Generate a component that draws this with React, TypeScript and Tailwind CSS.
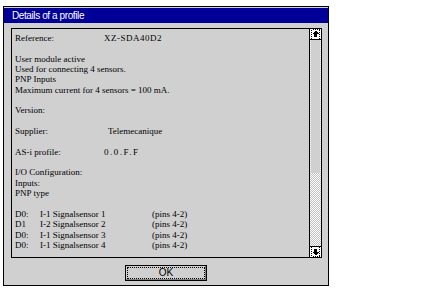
import React from "react";

const serif = { fontFamily: '"Liberation Serif", "Times New Roman", serif' };
const sans = { fontFamily: '"Liberation Sans", Arial, sans-serif' };

function ArrowButton({ down }: { down?: boolean }) {
  const dots: React.ReactElement[] = [];
  for (let y = 0; y < 10; y += 2) {
    dots.push(<rect key={"l" + y} x={1} y={y + (down ? 0 : 1)} width={1} height={1} fill="#000" />);
    dots.push(<rect key={"r" + y} x={9} y={y + (down ? 0 : 1)} width={1} height={1} fill="#000" />);
  }
  for (let x = 2; x < 9; x += 2) {
    dots.push(<rect key={"t" + x} x={x + 1} y={down ? 9 : 0} width={1} height={1} fill="#000" />);
  }
  return (
    <svg width="11" height="10" viewBox="0 0 11 10" shapeRendering="crispEdges" className="block">
      <rect x={0} y={0} width={11} height={10} fill="#fff" />
      {dots}
      {down ? (
        <g fill="#000">
          <rect x={4} y={2} width={3} height={3} />
          <polygon points="2,5 9,5 5.5,8.5" />
        </g>
      ) : (
        <g fill="#000">
          <polygon points="5.5,1.5 2,5 9,5" />
          <rect x={4} y={5} width={3} height={3} />
        </g>
      )}
    </svg>
  );
}

function Line({ children }: { children?: React.ReactNode }) {
  return <div className="h-[10.35px] leading-[10.35px] whitespace-nowrap flex">{children}</div>;
}

function Pair({ label, value, valueClass }: { label: string; value: string; valueClass?: string }) {
  return (
    <Line>
      <span className="w-[89px] shrink-0">{label}</span>
      <span className={valueClass}>{value}</span>
    </Line>
  );
}

function DRow({ a, b }: { a: string; b: string }) {
  return (
    <Line>
      <span className="w-[25px] shrink-0">{a}</span>
      <span className="w-[112px] shrink-0">{b}</span>
      <span>(pins 4-2)</span>
    </Line>
  );
}

export default function App() {
  return (
    <div className="w-[440px] h-[300px] bg-white overflow-hidden pt-[6px] pl-[3px]">
      <div className="w-[326px] h-[280px] border border-black bg-[#d0d0d0] flex flex-col">
        <div
          className="mt-[1px] h-[15px] bg-[#000098] text-white text-[10px] tracking-[-0.4px] pl-[8px] flex items-center leading-none"
          style={sans}
        >
          Details of a profile
        </div>
        <div className="mt-[5px] ml-[7px] w-[311px] h-[230px] border border-black flex">
          <div className="flex-1 pl-[3px] pt-[4px] text-[9px] text-black" style={serif}>
            <Pair label="Reference:" value="XZ-SDA40D2" valueClass="tracking-[0.5px]" />
            <Line />
            <Line>User module active</Line>
            <Line>Used for connecting 4 sensors.</Line>
            <Line>PNP Inputs</Line>
            <Line>Maximum current for 4 sensors = 100 mA.</Line>
            <Line />
            <Line>Version:</Line>
            <Line />
            <Pair label="Supplier:" value="Telemecanique" valueClass="pl-[4px]" />
            <Line />
            <Pair label="AS-i profile:" value="0.0.F.F" valueClass="tracking-[1.5px]" />
            <Line />
            <Line>I/O Configuration:</Line>
            <Line>Inputs:</Line>
            <Line>PNP type</Line>
            <Line />
            <DRow a="D0:" b="I-1 Signalsensor 1" />
            <DRow a="D1" b="I-2 Signalsensor 2" />
            <DRow a="D0:" b="I-1 Signalsensor 3" />
            <DRow a="D0:" b="I-1 Signalsensor 4" />
          </div>
          <div className="w-[12px] border-l border-black flex flex-col">
            <div className="h-[11px] border-b border-black">
              <ArrowButton />
            </div>
            <div className="h-[133px] border-x border-dotted border-white" />
            <div className="h-[73px] bg-[image:repeating-conic-gradient(#ffffff_0_25%,#c0c0c0_0_50%)] bg-[length:2px_2px]" />
            <div className="h-[11px] border-t border-black">
              <ArrowButton down />
            </div>
          </div>
        </div>
        <div className="mt-[7px] flex justify-center">
          <div
            className="w-[82px] h-[16px] border border-black shadow-[inset_-1px_-1px_0_#808080] p-[1px]"
            style={sans}
          >
            <div className="w-full h-full border border-dotted border-black flex items-center justify-center text-[10px] leading-none">
              OK
            </div>
          </div>
        </div>
      </div>
    </div>
  );
}
